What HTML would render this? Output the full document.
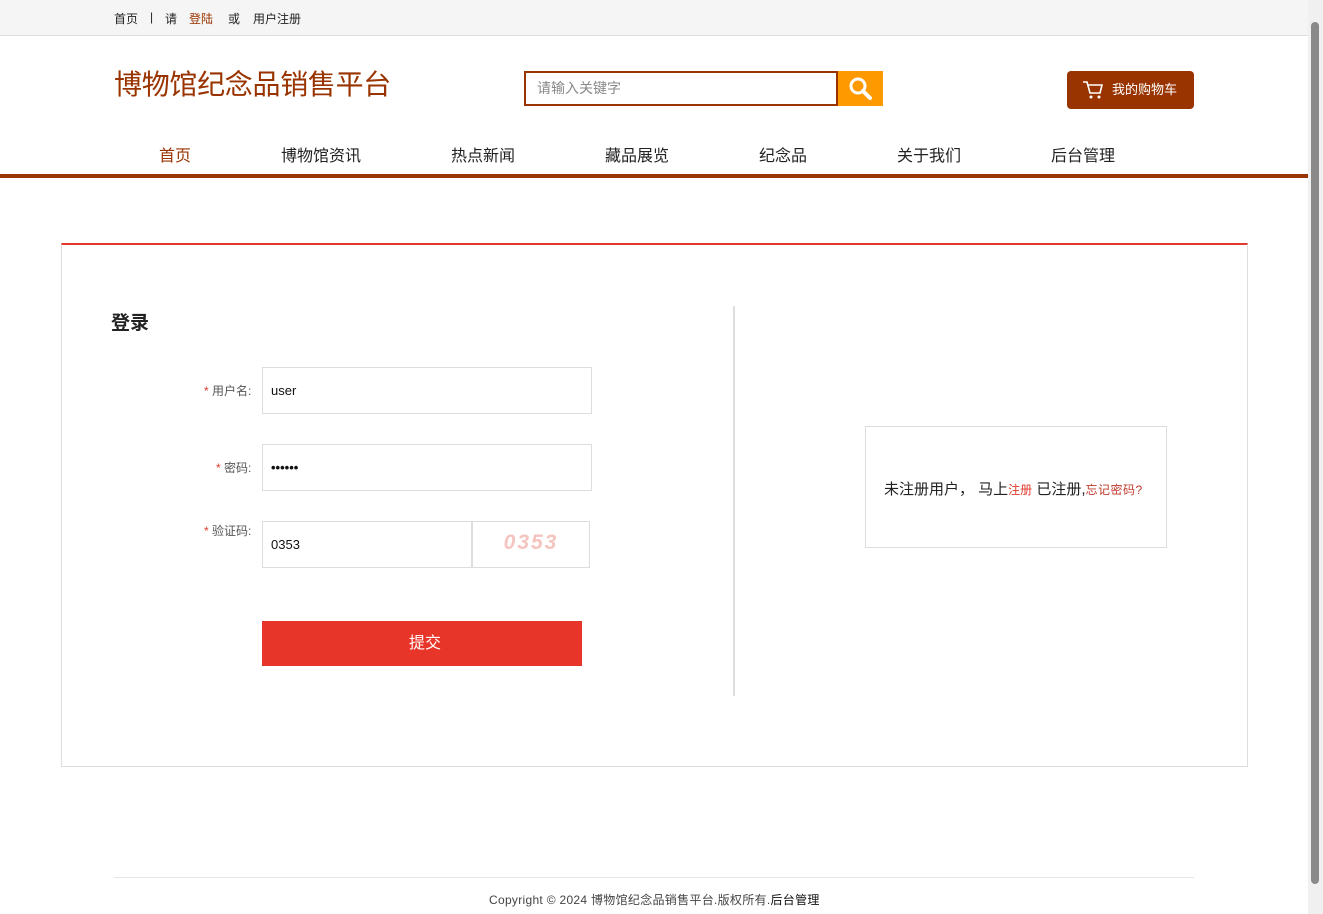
<!DOCTYPE html>
<html><head><meta charset="utf-8"><style>
*{margin:0;padding:0;box-sizing:border-box}
body{width:1323px;height:914px;position:relative;overflow:hidden;background:#fff;font-family:"Liberation Sans","Noto Sans CJK SC",sans-serif;color:#333}
.a{position:absolute;white-space:nowrap}
</style></head><body>
<div class="a" style="left:0;top:0;width:1308px;height:36px;background:#f5f5f5;border-bottom:1px solid #ddd"></div>
<div class="a" style="left:0;top:10px;font-size:12px;color:#222">
<span class="a" style="left:114px">首页</span><span class="a" style="left:150px">|</span><span class="a" style="left:165px">请</span><span class="a" style="left:189px;color:#993300">登陆</span><span class="a" style="left:228px">或</span><span class="a" style="left:253px">用户注册</span></div>
<div class="a" style="left:114px;top:63px;font-size:28px;letter-spacing:-0.3px;color:#993300">博物馆纪念品销售平台</div>
<div class="a" style="left:524px;top:71px;width:314px;height:35px;border:2px solid #993300;padding-left:11px;font-size:14px;line-height:31px;color:#888">请输入关键字</div>
<div class="a" style="left:838px;top:71px;width:45px;height:35px;background:#ff9900">
<svg width="45" height="35" viewBox="0 0 45 35"><circle cx="20" cy="15" r="7" fill="none" stroke="#fff" stroke-width="3"/><line x1="25" y1="20" x2="32" y2="27" stroke="#fff" stroke-width="4" stroke-linecap="round"/></svg></div>
<div class="a" style="left:1067px;top:71px;width:127px;height:38px;background:#993300;border-radius:4px;color:#fff;font-size:13px;line-height:38px;padding-left:45px">我的购物车</div>
<svg class="a" style="left:1082px;top:80px" width="22" height="20" viewBox="0 0 22 20"><path d="M1 2h4l3 11h10l2-8H6" fill="none" stroke="#fff" stroke-width="1.6"/><circle cx="9" cy="17" r="1.5" fill="#fff"/><circle cx="17" cy="17" r="1.5" fill="#fff"/></svg>
<div class="a" style="left:0;top:142px;font-size:16px;color:#222;width:1308px">
<span class="a" style="left:159px;color:#993300">首页</span><span class="a" style="left:281px">博物馆资讯</span><span class="a" style="left:451px">热点新闻</span><span class="a" style="left:605px">藏品展览</span><span class="a" style="left:759px">纪念品</span><span class="a" style="left:897px">关于我们</span><span class="a" style="left:1051px">后台管理</span></div>
<div class="a" style="left:0;top:174px;width:1308px;height:4px;background:#993300"></div>
<div class="a" style="left:61px;top:243px;width:1187px;height:524px;border:1px solid #ddd;border-top:2px solid #e0392b"></div>
<div class="a" style="left:111px;top:308px;font-size:19px;font-weight:bold;color:#222">登录</div>
<div class="a" style="left:733px;top:306px;width:2px;height:390px;background:#ddd"></div>
<div class="a" style="left:204px;top:382px;font-size:12px;color:#555"><span style="color:#e0392b">*</span> 用户名:</div>
<div class="a" style="left:262px;top:367px;width:330px;height:47px;border:1px solid #ddd;font-size:13px;line-height:45px;padding-left:8px;color:#111">user</div>
<div class="a" style="left:216px;top:459px;font-size:12px;color:#555"><span style="color:#e0392b">*</span> 密码:</div>
<div class="a" style="left:262px;top:444px;width:330px;height:47px;border:1px solid #ddd;font-size:13px;line-height:45px;padding-left:8px;color:#111;font-weight:bold">••••••</div>
<div class="a" style="left:204px;top:522px;font-size:12px;color:#555"><span style="color:#e0392b">*</span> 验证码:</div>
<div class="a" style="left:262px;top:521px;width:210px;height:47px;border:1px solid #ddd;font-size:13px;line-height:45px;padding-left:8px;color:#111">0353</div>
<div class="a" style="left:472px;top:521px;width:118px;height:47px;border:1px solid #ddd;font-size:21px;line-height:42px;text-align:center;color:#f4c4bf;font-weight:bold;font-style:italic;letter-spacing:2px">0353</div>
<div class="a" style="left:262px;top:621px;width:320px;height:45px;background:#e8352a;color:#fff;font-size:16px;line-height:45px;text-align:center;padding-left:6px">提交</div>
<div class="a" style="left:865px;top:426px;width:302px;height:122px;border:1px solid #ddd"></div>
<div class="a" style="left:884px;top:478px;font-size:15px;color:#222">未注册用户， 马上<span style="color:#e0392b;font-size:12px">注册</span> 已注册,<span style="color:#c0392b;font-size:12px;letter-spacing:0.5px">忘记密码?</span></div>
<div class="a" style="left:114px;top:877px;width:1080px;height:1px;background:#e5e5e5"></div>
<div class="a" style="left:489px;top:891px;font-size:12px;color:#444;letter-spacing:0.3px">Copyright © 2024 博物馆纪念品销售平台.版权所有.<span style="color:#111">后台管理</span></div>
<div class="a" style="left:1308px;top:0;width:15px;height:914px;background:#f0f0f0"></div>
<div class="a" style="left:1311px;top:22px;width:8px;height:862px;background:#8a8a8a;border-radius:4px"></div>
</body></html>
